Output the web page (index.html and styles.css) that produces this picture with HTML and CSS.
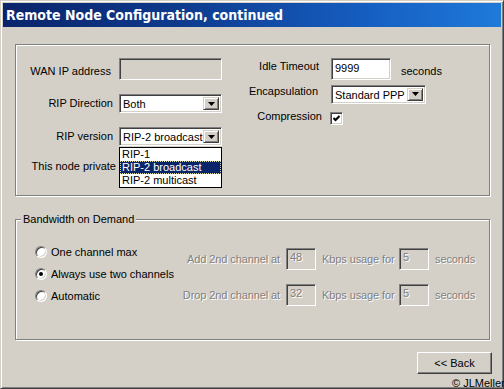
FILE: index.html
```html
<!DOCTYPE html>
<html>
<head>
<meta charset="utf-8">
<link rel="stylesheet" href="styles.css">
</head>
<body>
<div class="window">
  <div class="titlebar"><span class="title">Remote Node Configuration, continued</span></div>
  <div class="content">
    <div class="group group-main">
      <div class="left-grid">
        <span class="lbl lbl-wan">WAN IP address</span>
        <div class="edit edit-disabled edit-wan"></div>

        <span class="lbl">RIP Direction</span>
        <div class="combo"><span class="combo-text">Both</span><span class="dd-btn"><svg width="7" height="4" viewBox="0 0 7 4"><polygon points="0,0 7,0 3.5,4" fill="#000"/></svg></span></div>

        <span class="lbl">RIP version</span>
        <div class="combo-wrap">
          <div class="combo"><span class="combo-text">RIP-2 broadcast</span><span class="dd-btn"><svg width="7" height="4" viewBox="0 0 7 4"><polygon points="0,0 7,0 3.5,4" fill="#000"/></svg></span></div>
          <ul class="droplist">
            <li>RIP-1</li>
            <li class="sel">RIP-2 broadcast</li>
            <li>RIP-2 multicast</li>
          </ul>
        </div>

        <span class="lbl lbl-private">This node private</span>
        <div></div>
      </div>

      <div class="right-grid">
        <span class="lbl lbl-idle">Idle Timeout</span>
        <div class="idle-cell"><div class="edit edit-idle">9999</div><span class="unit">seconds</span></div>

        <span class="lbl lbl-encap">Encapsulation</span>
        <div class="combo combo-encap"><span class="combo-text">Standard PPP</span><span class="dd-btn"><svg width="7" height="4" viewBox="0 0 7 4"><polygon points="0,0 7,0 3.5,4" fill="#000"/></svg></span></div>

        <span class="lbl lbl-comp">Compression</span>
        <div class="check-cell"><span class="checkbox"><svg width="7" height="7" viewBox="0 0 7 7"><polyline points="0.5,3 2.5,5 6.5,1" fill="none" stroke="#000" stroke-width="2"/></svg></span></div>
      </div>
    </div>

    <fieldset class="group group-bod">
      <legend>Bandwidth on Demand</legend>
      <div class="bod-body">
        <div class="radios">
          <div class="radio-row"><span class="radio"></span><span>One channel max</span></div>
          <div class="radio-row"><span class="radio checked"></span><span>Always use two channels</span></div>
          <div class="radio-row"><span class="radio"></span><span>Automatic</span></div>
        </div>
        <div class="thresholds">
          <span class="dis-lbl right">Add 2nd channel at</span>
          <div class="edit edit-disabled edit-small">48</div>
          <span class="dis-lbl">Kbps usage for</span>
          <div class="edit edit-disabled edit-small">5</div>
          <span class="dis-lbl">seconds</span>

          <span class="dis-lbl right">Drop 2nd channel at</span>
          <div class="edit edit-disabled edit-small">32</div>
          <span class="dis-lbl">Kbps usage for</span>
          <div class="edit edit-disabled edit-small">5</div>
          <span class="dis-lbl">seconds</span>
        </div>
      </div>
    </fieldset>

    <div class="footer">
      <button class="btn">&lt;&lt; Back</button>
    </div>
  </div>
  <div class="copyright">© JLMeller</div>
</div>
</body>
</html>
```

FILE: styles.css
```css
* { box-sizing: border-box; }
html, body { margin: 0; padding: 0; }
body {
  width: 504px;
  height: 389px;
  overflow: hidden;
  background: #d4d0c8;
  font-family: "Liberation Sans", Arial, sans-serif;
  font-size: 11px;
  line-height: 13px;
  color: #000;
}

.window {
  position: relative;
  width: 504px;
  height: 389px;
  background: #d4d0c8;
  border: 1px solid;
  border-color: #d4d0c8 #404040 #404040 #d4d0c8;
  box-shadow: inset 1px 1px 0 #fff, inset -1px -1px 0 #808080;
  padding: 2px;
  display: flex;
  flex-direction: column;
}

.titlebar {
  height: 24px;
  flex: none;
  background: linear-gradient(90deg, #0a246a 0%, #0e3a8c 35%, #1660c4 75%, #1e7ad8 100%);
  color: #fff;
  display: flex;
  align-items: center;
  padding-left: 3px;
}
.title {
  font-family: "DejaVu Sans Condensed", "DejaVu Sans", sans-serif;
  font-stretch: condensed;
  font-weight: bold;
  font-size: 14px;
  line-height: 16px;
}

.content {
  padding: 17px 11px 0 12px;
}

.group {
  border: 1px solid #808080;
  box-shadow: 1px 1px 0 #fff, inset 1px 1px 0 #fff;
}

/* ---------- first group ---------- */
.group-main {
  height: 152px;
  display: flex;
  align-items: flex-start;
  padding-top: 13px;
}

.left-grid {
  display: grid;
  grid-template-columns: 97px 103px;
  grid-template-rows: 22px 19px 19px 13px;
  column-gap: 6px;
  row-gap: 14px;
  align-items: center;
}
.lbl { text-align: right; white-space: nowrap; }
.lbl-wan { padding-top: 4px; margin-right: 2px; }
.lbl-private { justify-self: end; margin-right: -3px; }

.right-grid {
  margin-left: 17px;
  display: grid;
  grid-template-columns: 80px auto;
  grid-template-rows: 22px 20px 13px;
  column-gap: 12px;
  row-gap: 4px;
  align-items: center;
}
.right-grid .lbl-comp { margin-top: 4px; margin-right: -3px; }
.lbl-idle { align-self: start; padding-top: 2px; }
.lbl-encap { align-self: start; padding-top: 1px; margin-right: 1px; }

.idle-cell { display: flex; align-items: flex-end; height: 22px; }
.unit { margin-left: 10px; padding-bottom: 2px; }

.check-cell { margin-top: 8px; margin-left: -1px; height: 13px; }

/* edits */
.edit {
  height: 22px;
  border: 1px solid;
  border-color: #808080 #fff #fff #808080;
  box-shadow: inset 1px 1px 0 #404040, inset -1px -1px 0 #d4d0c8;
  background: #fff;
  padding: 3px 0 0 3px;
  white-space: nowrap;
}
.edit-disabled { background: #d4d0c8; }
.edit-idle { width: 60px; }
.edit-small {
  width: 30px;
  color: #808080;
  text-shadow: 1px 1px 0 #fff;
  padding-top: 2px;
}

/* combos */
.combo {
  height: 19px;
  display: flex;
  align-items: stretch;
  border: 1px solid;
  border-color: #808080 #fff #fff #808080;
  box-shadow: inset 1px 1px 0 #404040, inset -1px -1px 0 #d4d0c8;
  background: #fff;
  padding: 2px;
}
.combo-text { flex: 1; padding-left: 1px; line-height: 15px; white-space: nowrap; overflow: hidden; }
.combo-encap { width: 95px; }
.dd-btn {
  width: 16px;
  flex: none;
  background: #d4d0c8;
  border: 1px solid;
  border-color: #d4d0c8 #404040 #404040 #d4d0c8;
  box-shadow: inset 1px 1px 0 #fff, inset -1px -1px 0 #808080;
  display: flex;
  align-items: center;
  justify-content: center;
}
.dd-btn svg { display: block; }

.combo-wrap { position: relative; }
.droplist {
  position: absolute;
  left: 0;
  top: 100%;
  width: 103px;
  margin: 1px 0 0;
  padding: 0;
  list-style: none;
  background: #fff;
  border: 1px solid #000;
  z-index: 2;
}
.droplist li {
  height: 13px;
  line-height: 13px;
  padding-left: 2px;
  white-space: nowrap;
}
.droplist li.sel {
  background: #0a246a;
  color: #fff;
  outline: 1px dotted #d8d8a0;
  outline-offset: -1px;
}

/* checkbox */
.checkbox {
  display: flex;
  align-items: center;
  justify-content: center;
  width: 13px;
  height: 13px;
  background: #fff;
  border: 1px solid;
  border-color: #808080 #fff #fff #808080;
  box-shadow: inset 1px 1px 0 #404040, inset -1px -1px 0 #d4d0c8;
}
.checkbox svg { display: block; }

/* ---------- second group ---------- */
fieldset.group-bod {
  margin: 17px 0 0;
  padding: 0;
  min-width: 0;
  height: 127px;
}
.group-bod legend {
  margin-left: 5px;
  padding: 0 2px;
  line-height: 13px;
  background: #d4d0c8;
}
.bod-body {
  display: flex;
  align-items: flex-start;
  padding: 15px 14px 0 19px;
}
.radios { display: flex; flex-direction: column; }
.radio-row {
  height: 22px;
  display: flex;
  align-items: center;
  gap: 4px;
  white-space: nowrap;
}
.radio {
  position: relative;
  width: 12px;
  height: 12px;
  border-radius: 50%;
  background: #fff;
  border: 1px solid;
  border-color: #808080 #fff #fff #808080;
  box-shadow: inset 1px 1px 0 #404040, inset -1px -1px 0 #d4d0c8;
}
.radio.checked::after {
  content: "";
  position: absolute;
  left: 3px;
  top: 3px;
  width: 4px;
  height: 4px;
  border-radius: 50%;
  background: #000;
}

.thresholds {
  margin-left: auto;
  margin-top: 7px;
  display: grid;
  grid-template-columns: 94px 30px 71px 30px 40px;
  grid-template-rows: 22px 22px;
  row-gap: 14px;
  column-gap: 6px;
  align-items: center;
}
.dis-lbl {
  color: #808080;
  text-shadow: 1px 1px 0 #fff;
  white-space: nowrap;
  letter-spacing: -0.1px;
}
.dis-lbl.right { justify-self: end; }

/* footer */
.footer {
  display: flex;
  justify-content: flex-end;
  margin-top: 12px;
  margin-right: -2px;
}
.btn {
  width: 75px;
  height: 22px;
  font: inherit;
  font-family: "Liberation Sans", Arial, sans-serif;
  font-size: 11px;
  color: #000;
  background: #d4d0c8;
  border: 1px solid;
  border-color: #fff #404040 #404040 #fff;
  box-shadow: inset -1px -1px 0 #808080;
  padding: 0;
}

.copyright {
  position: absolute;
  left: 451px;
  top: 376px;
  white-space: nowrap;
  font-size: 11px;
  line-height: 13px;
}
```
